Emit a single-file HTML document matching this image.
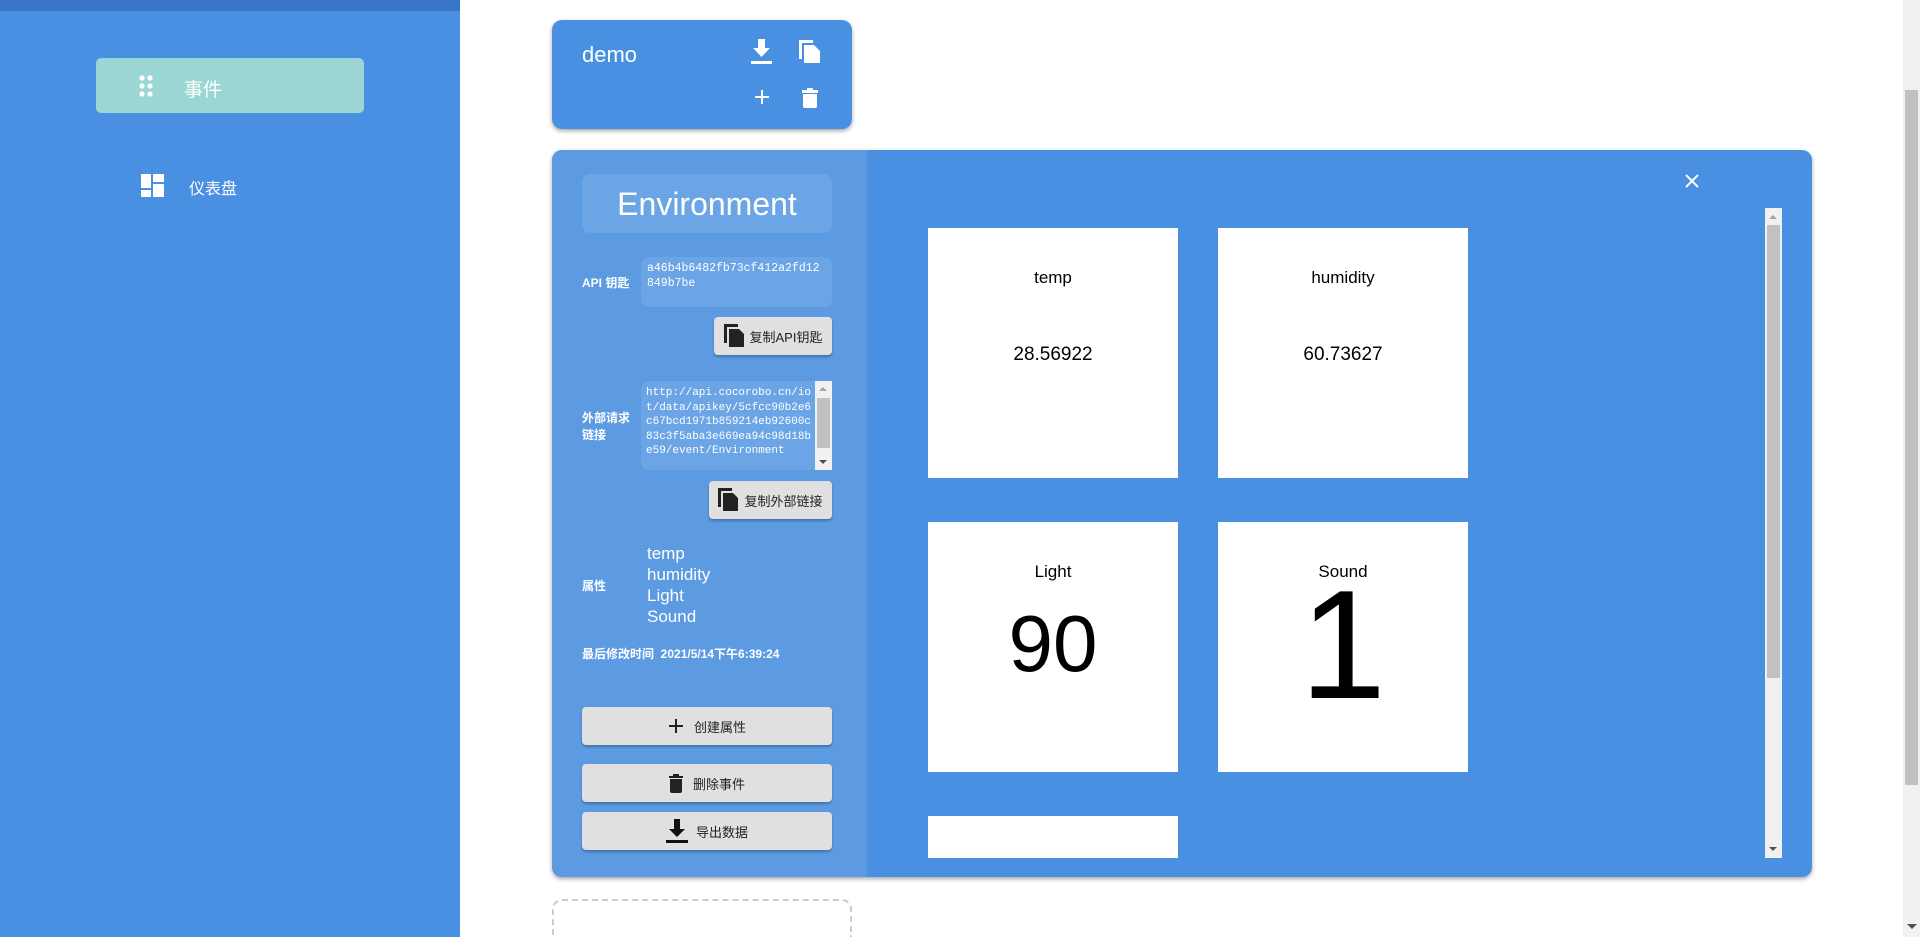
<!DOCTYPE html>
<html><head><meta charset="utf-8"><style>
*{margin:0;padding:0;box-sizing:border-box}
html,body{width:1920px;height:937px;overflow:hidden}
body{background:#fff;position:relative;font-family:"Liberation Sans","Noto Sans CJK SC",sans-serif}
.a{position:absolute}
.side{left:0;top:0;width:460px;height:937px;background:#4a90e2}
.topbar{left:0;top:0;width:460px;height:11px;background:#3777c6}
.btn{position:absolute;background:#e0e0e0;border-radius:4px;box-shadow:0 2px 2px rgba(0,0,0,.25);color:#222;font-size:13px;display:flex;align-items:center;justify-content:center}
.lbl{position:absolute;color:#fff;font-size:12px;font-weight:bold}
.card{position:absolute;background:#fff;width:250px;height:250px;text-align:center;color:#000}
.card .t{position:absolute;left:0;right:0;top:40px;font-size:17px}
.card .v{position:absolute;left:0;right:0;top:116px;font-size:19px}
.mono{font-family:"Liberation Mono","DejaVu Sans Mono",monospace;font-size:11.5px;line-height:14.5px;color:#fff;word-break:break-all}
</style></head><body>
<div class="a side"></div>
<div class="a topbar"></div>
<div class="a" style="left:96px;top:58px;width:268px;height:55px;background:#9cd6d4;border-radius:5px"></div>
<svg class="a" style="left:138px;top:74px" width="16" height="24"><g fill="#fff"><circle cx="4" cy="4" r="2.6"/><circle cx="12" cy="4" r="2.6"/><circle cx="4" cy="12" r="2.6"/><circle cx="12" cy="12" r="2.6"/><circle cx="4" cy="20" r="2.6"/><circle cx="12" cy="20" r="2.6"/></g></svg>
<div class="a" style="left:184px;top:75px;color:#fff;font-size:19px">事件</div>
<svg class="a" style="left:141px;top:174px" width="24" height="24"><g fill="#fff"><rect x="0" y="0" width="10" height="14"/><rect x="12" y="0" width="11" height="8"/><rect x="0" y="16" width="10" height="7"/><rect x="12" y="10" width="11" height="13"/></g></svg>
<div class="a" style="left:189px;top:175px;color:#fff;font-size:16px">仪表盘</div>

<div class="a" style="left:552px;top:20px;width:300px;height:109px;background:#4a90e2;border-radius:10px;box-shadow:0 2px 4px rgba(0,0,0,.35)"></div>
<div class="a" style="left:582px;top:42px;color:#fff;font-size:22px">demo</div>
<svg class="a" style="left:750px;top:39px" width="24" height="26"><path fill="#fff" d="M8 0h7v9h5l-8.5 9L3 9h5z M1 22h21v3H1z"/></svg>
<svg class="a" style="left:799px;top:40px" width="22" height="24"><path fill="#fff" d="M0 2h3v17H0z M0 0h14v3H0z M5 5h10l6 6v12H5z"/></svg>
<svg class="a" style="left:754px;top:89px" width="16" height="16"><path stroke="#fff" stroke-width="2" d="M8 1v14M1 8h14"/></svg>
<svg class="a" style="left:802px;top:88px" width="16" height="20"><path fill="#fff" d="M0 2h16v3H0z M5 0h6v2H5z M1 6h14v12a2 2 0 0 1-2 2H3a2 2 0 0 1-2-2z"/></svg>

<div class="a" style="left:552px;top:150px;width:1260px;height:727px;background:#4a90e2;border-radius:10px;box-shadow:0 2px 4px rgba(0,0,0,.35);overflow:hidden">
  <div class="a" style="left:0;top:0;width:315px;height:727px;background:#5c9ae2"></div>
</div>
<div class="a" style="left:582px;top:174px;width:250px;height:59px;background:#6ba5e6;border-radius:8px;color:#fff;font-size:32px;text-align:center;line-height:61px">Environment</div>
<div class="lbl" style="left:582px;top:274px">API 钥匙</div>
<div class="a mono" style="left:641px;top:257px;width:191px;height:50px;background:#6ba5e6;border-radius:8px;padding:5px 6px">a46b4b6482fb73cf412a2fd12849b7be</div>
<div class="btn" style="left:714px;top:317px;width:118px;height:38px"><svg width="20" height="24" style="margin-right:6px"><path fill="#222" d="M0 2h3v17H0z M0 0h14v3H0z M5 5h10l6 6v12H5z"/></svg>复制API钥匙</div>
<div class="lbl" style="left:582px;top:410px;line-height:17px">外部请求<br>链接</div>
<div class="a" style="left:641px;top:381px;width:191px;height:89px;background:#6ba5e6;border-radius:8px 0 0 8px;overflow:hidden">
 <div class="mono" style="position:absolute;left:5px;top:5px;width:166px;font-size:11px">http://api.cocorobo.cn/iot/data/apikey/5cfcc90b2e6c67bcd1971b859214eb92600c83c3f5aba3e669ea94c98d18be59/event/Environment</div>
 <div class="a" style="left:174px;top:0;width:17px;height:89px;background:#f1f1f1"></div>
 <div class="a" style="left:176px;top:17px;width:13px;height:50px;background:#c1c1c1"></div>
 <div class="a" style="left:178px;top:6px;width:0;height:0;border:4px solid transparent;border-bottom-color:#a3a3a3;border-top:0"></div>
 <div class="a" style="left:178px;top:79px;width:0;height:0;border:4px solid transparent;border-top-color:#505050;border-bottom:0"></div>
</div>
<div class="btn" style="left:709px;top:481px;width:123px;height:38px"><svg width="20" height="24" style="margin-right:6px"><path fill="#222" d="M0 2h3v17H0z M0 0h14v3H0z M5 5h10l6 6v12H5z"/></svg>复制外部链接</div>
<div class="lbl" style="left:582px;top:577px">属性</div>
<div class="a" style="left:647px;top:543px;color:#fff;font-size:17px;line-height:21px">temp<br>humidity<br>Light<br>Sound</div>
<div class="lbl" style="left:582px;top:645px">最后修改时间&nbsp;&nbsp;2021/5/14下午6:39:24</div>
<div class="btn" style="left:582px;top:707px;width:250px;height:38px"><svg width="16" height="16" style="margin-right:10px"><path stroke="#222" stroke-width="2" d="M8 1v14M1 8h14"/></svg>创建属性</div>
<div class="btn" style="left:582px;top:764px;width:250px;height:38px"><svg width="14" height="19" style="margin-right:10px"><path fill="#222" d="M0 2h14v2H0z M4 0h6v2H4z M1 5h12v12a2 2 0 0 1-2 2H3a2 2 0 0 1-2-2z"/></svg>删除事件</div>
<div class="btn" style="left:582px;top:812px;width:250px;height:38px"><svg width="22" height="24" style="margin-right:8px"><path fill="#111" d="M8 0h6v10h5l-8 8-8-8h5z M0 21h22v3H0z"/></svg>导出数据</div>

<svg class="a" style="left:1685px;top:174px" width="14" height="14"><path stroke="#fff" stroke-width="2" d="M1 1l12 12M13 1L1 13"/></svg>

<div style="position:absolute;left:920px;top:208px;width:845px;height:650px;overflow:hidden">
 <div class="card" style="left:8px;top:20px"><div class="t">temp</div><div class="v">28.56922</div></div>
 <div class="card" style="left:298px;top:20px"><div class="t">humidity</div><div class="v">60.73627</div></div>
 <div class="card" style="left:8px;top:314px"><div class="t">Light</div><div style="position:absolute;left:0;right:0;top:76px;font-size:80px">90</div></div>
 <div class="card" style="left:298px;top:314px"><div class="t">Sound</div><div style="position:absolute;left:0;right:0;top:38px;font-size:155px;line-height:1.1">1</div></div>
 <div class="card" style="left:8px;top:608px"></div>
</div>
<div class="a" style="left:1765px;top:208px;width:17px;height:650px;background:#f1f1f1"></div>
<div class="a" style="left:1767px;top:225px;width:13px;height:453px;background:#c1c1c1"></div>
<div class="a" style="left:1769px;top:215px;border:4px solid transparent;border-bottom-color:#a3a3a3;border-top:0"></div>
<div class="a" style="left:1769px;top:847px;border:4px solid transparent;border-top-color:#505050;border-bottom:0"></div>

<div class="a" style="left:552px;top:899px;width:300px;height:38px;border:2px dashed #ccc;border-bottom:none;border-radius:10px 10px 0 0"></div>

<div class="a" style="left:1903px;top:0;width:17px;height:937px;background:#f1f1f1"></div>
<div class="a" style="left:1905px;top:90px;width:13px;height:695px;background:#c1c1c1"></div>
<div class="a" style="left:1907px;top:924px;border:5px solid transparent;border-top-color:#505050;border-bottom:0"></div>
</body></html>
